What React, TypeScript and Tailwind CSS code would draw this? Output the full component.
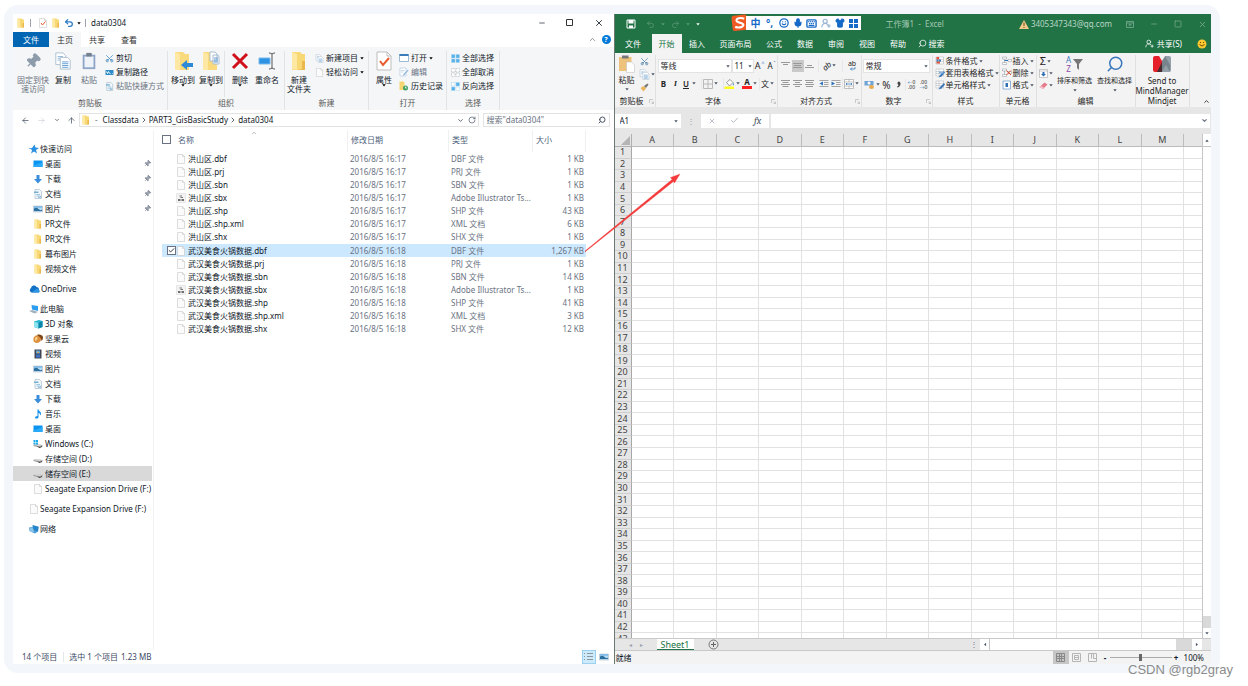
import type { ReactNode } from 'react'
import {
  ArrowLeft, ArrowRight, ArrowUp, Check, ChevronDown, ChevronRight, ChevronUp, Keyboard, Mic,
  Minus, Pin, Redo2, RotateCw, Scissors, Search, Shirt, Smile, Square, Undo2, UserRoundPlus, X,
} from 'lucide-react'

/* ---------- small drawings ---------- */

function Caret({ className = 'text-gray-600' }: { className?: string }) {
  return (
    <svg width="4" height="3" viewBox="0 0 4 3" className={`shrink-0 ${className}`}>
      <path d="M.3.3h3.4L2 2.5z" fill="currentColor" />
    </svg>
  )
}

function FolderIcon({ size = 10 }: { size?: number }) {
  return (
    <svg width={size} height={size} viewBox="0 0 20 20" className="shrink-0">
      <path d="M3 1h8l2 2h3v16H3z" fill="#f8d775" />
      <path d="M3 1l5 2v16l-5-1z" fill="#ffe9a2" />
      <path d="M13 10h3v9H8l5-1z" fill="#e9b94d" />
    </svg>
  )
}

function PageIcon({ size = 10 }: { size?: number }) {
  return (
    <svg width={size} height={size} viewBox="0 0 20 20" className="shrink-0">
      <path d="M3 1h10l4 4v14H3z" fill="#fbfbfb" stroke="#bdbdbd" />
      <path d="M13 1v4h4" fill="none" stroke="#bdbdbd" />
    </svg>
  )
}

function ScriptIcon() {
  return (
    <svg width="10" height="10" viewBox="0 0 20 20" className="shrink-0">
      <path d="M1 1h18v18H1z" fill="#f3f3f3" stroke="#d4d4d4" />
      <path d="M7 6h5M9 9h5" stroke="#777" strokeWidth="2" />
      <path d="M4 14h5M11 14h5" stroke="#444" strokeWidth="3" />
    </svg>
  )
}

function DocIcon({ size = 10 }: { size?: number }) {
  return (
    <svg width={size} height={size} viewBox="0 0 20 20" className="shrink-0">
      <path d="M4 1h9l4 4v14H4z" fill="#f1f7fb" stroke="#8ba5b8" />
      <path d="M2 5h9v3H2z" fill="#78b0d4" />
      <path d="M7 11h7M7 14h3M11 14h4v3h-4z" stroke="#4c92c4" fill="none" />
    </svg>
  )
}

function DesktopIcon() {
  return (
    <svg width="10" height="10" viewBox="0 0 20 20" className="shrink-0">
      <path d="M1 3h18v13H1z" fill="#0a94f0" />
      <path d="M1 13L19 6v10H1z" fill="#29a9f8" />
    </svg>
  )
}

function DownloadIcon() {
  return (
    <svg width="10" height="10" viewBox="0 0 20 20" className="shrink-0">
      <path d="M7 2h6v8h5l-8 9-8-9h5z" fill="#3a8ddb" />
    </svg>
  )
}

function PictureIcon() {
  return (
    <svg width="10" height="10" viewBox="0 0 20 20" className="shrink-0">
      <path d="M1 4h18v12H1z" fill="#b9dcf5" stroke="#a4b1bd" />
      <path d="M2 9q5-3 9 1t7 1v3H2z" fill="#2c6f9d" />
      <path d="M2 5h16v2H2z" fill="#5aa5e0" />
    </svg>
  )
}

function VideoIcon() {
  return (
    <svg width="10" height="10" viewBox="0 0 20 20" className="shrink-0">
      <path d="M3 1h14v18H3z" fill="#3e4551" />
      <path d="M6 3h8v6H6z" fill="#5aa7de" />
      <path d="M6 11h8v6H6z" fill="#3e70c4" />
      <path d="M9 4l4 4H8z" fill="#e9a251" />
    </svg>
  )
}

function MusicIcon() {
  return (
    <svg width="10" height="10" viewBox="0 0 20 20" className="shrink-0">
      <path d="M9 1h2c1 4 5 4 5 8 0 2-1 3-2 4 0-4-1-5-3-5v8c0 2-2 3-4 3s-3-1-3-2 2-3 5-3z" fill="#1590e8" />
    </svg>
  )
}

function StarIcon() {
  return (
    <svg width="10" height="10" viewBox="0 0 20 20" className="shrink-0">
      <path d="M11 1l2 6 7 1-6 4 2 7-6-4-6 4 2-6-2-3H0V9l6-1z" fill="#2b8fe0" />
    </svg>
  )
}

function CloudIcon() {
  return (
    <svg width="11" height="10" viewBox="0 0 22 20" className="shrink-0">
      <path d="M5 17a5 5 0 0 1-1-9 6 6 0 0 1 11-2 5 5 0 0 1 5 6 3 3 0 0 1-1 5z" fill="#1272c8" />
      <path d="M5 17l11-8 4 3a3 3 0 0 1-1 5z" fill="#2f96e4" />
    </svg>
  )
}

function ComputerIcon() {
  return (
    <svg width="10" height="10" viewBox="0 0 20 20" className="shrink-0">
      <path d="M5 2l13 2v10L6 11z" fill="#2c9df0" />
      <path d="M0 14l7-2 11 4-7 3z" fill="#a4b2bd" />
    </svg>
  )
}

function CubeIcon() {
  return (
    <svg width="10" height="10" viewBox="0 0 20 20" className="shrink-0">
      <path d="M2 5l10-3 7 2v12l-8 3-9-3z" fill="#27b4cf" />
      <path d="M2 5l9 3v11l-9-3z" fill="#8ae3ef" />
      <path d="M11 8l8-4v12l-8 3z" fill="#0c85a8" />
    </svg>
  )
}

function NutIcon() {
  return (
    <svg width="10" height="10" viewBox="0 0 20 20" className="shrink-0">
      <path d="M3 5c4-4 11-3 14 1 1 6-3 11-9 12C0 18-1 9 3 5z" fill="#dc8f3c" />
      <path d="M8 2c5-2 11 0 12 4 0 4-1 6-3 8 0-6-4-9-9-12z" fill="#7b4517" />
      <path d="M4 8c2-3 5-2 5 1s-4 6-5 4z" fill="#f8cf8c" />
    </svg>
  )
}

function DriveIcon({ windows }: { windows?: boolean }) {
  return (
    <svg width="10" height="10" viewBox="0 0 20 20" className="shrink-0">
      <path d="M1 12l5-2 13 2v3l-6 2-12-3z" fill="#9b9b9b" />
      <path d="M1 12l5-2 13 2-6 2z" fill="#e0e0e0" />
      <path d="M8 15l6 1 4-2v2l-5 2z" fill="#404040" />
      {windows && <path d="M1 2h4v4H1zM6 2h4v4H6zM1 7h4v4H1zM6 7h4v4H6z" fill="#14a8ec" />}
    </svg>
  )
}

function NetworkIcon() {
  return (
    <svg width="10" height="10" viewBox="0 0 20 20" className="shrink-0">
      <path d="M7 2l12 3-1 10-6 4L1 14l-1-7 7-1z" fill="#4c9fd6" />
      <path d="M8 3l11 3-1 9-9-3z" fill="#2583c9" />
      <path d="M1 8l6-1 3 7-3 3-5-2z" fill="#8cc4e8" />
    </svg>
  )
}

function CopyPages({ size = 20 }: { size?: number }) {
  return (
    <svg width={size} height={size} viewBox="0 0 20 20" className="shrink-0">
      <path d="M2 1h8l3 3v10H2z" fill="#fff" stroke="#a9bdd0" />
      <path d="M4 5h6M4 7h6M4 9h6" stroke="#8db4d8" />
      <path d="M7 6h8l3 3v10H7z" fill="#fff" stroke="#a9bdd0" />
      <path d="M9 11h7M9 13h7M9 15h7M9 17h7" stroke="#5f9bd2" />
    </svg>
  )
}

function Clipboard({ size = 20 }: { size?: number }) {
  return (
    <svg width={size} height={size} viewBox="0 0 20 20" className="shrink-0">
      <path d="M3 3h14v16H3z" fill="#8da5c8" />
      <path d="M5 5h10v12H5z" fill="#eef3fa" />
      <path d="M7 1h6v4H7z" fill="#74808f" />
    </svg>
  )
}

function MoveToIcon() {
  return (
    <svg width="21" height="20" viewBox="0 0 21 20">
      <path d="M2 1h8l2 2h4v16H2z" fill="#f9da7c" />
      <path d="M2 1l5 2v16H2z" fill="#ffe8a3" />
      <path d="M8 14l6-5v3h6v4h-6v3z" fill="#2c8ad9" />
    </svg>
  )
}

function CopyToIcon() {
  return (
    <svg width="21" height="20" viewBox="0 0 21 20">
      <path d="M2 1h8l2 2h4v16H2z" fill="#f9da7c" />
      <path d="M2 1l5 2v16H2z" fill="#ffe8a3" />
      <path d="M9 1h5l2 2v7H9zM12 4h5l1 2v7h-6z" fill="#fff" stroke="#a9bdd0" />
      <path d="M13 7h4M13 9h4M13 11h4" stroke="#5f9bd2" />
    </svg>
  )
}

function DeleteIcon() {
  return (
    <svg width="18" height="18" viewBox="0 0 18 18">
      <path d="M2 2l14 14M16 2L2 16" stroke="#d0111b" strokeWidth="3" />
    </svg>
  )
}

function RenameIcon() {
  return (
    <svg width="18" height="18" viewBox="0 0 18 18">
      <path d="M1 6h11v6H1z" fill="#2b92e4" stroke="#79b9ec" />
      <path d="M14 2v14M11 1q2 0 3 1 1-1 3-1M11 17q2 0 3-1 1 1 3 1" fill="none" stroke="#555" />
    </svg>
  )
}

function CheckDoc({ size = 20 }: { size?: number }) {
  return (
    <svg width={size} height={size} viewBox="0 0 20 20" className="shrink-0">
      <path d="M3 1h10l4 4v14H3z" fill="#fff" stroke="#bdbdbd" />
      <path d="M13 1v4h4" fill="none" stroke="#bdbdbd" />
      <path d="M6 10l3 4 6-7" fill="none" stroke="#ea5a2b" strokeWidth="2" />
    </svg>
  )
}

function PathIcon() {
  return (
    <svg width="9" height="9" viewBox="0 0 18 18" className="shrink-0">
      <path d="M1 4h16v10H1z" fill="#2d8bc9" />
      <path d="M3 7l2 4 2-4 2 4M11 11h1M14 11h1" stroke="#fff" fill="none" strokeWidth="2" />
    </svg>
  )
}

function WindowIcon() {
  return (
    <svg width="10" height="10" viewBox="0 0 20 20" className="shrink-0">
      <path d="M1 3h18v14H1z" fill="#fff" stroke="#7da3c6" strokeWidth="1.5" />
      <path d="M1 2h18v4H1z" fill="#3c7cba" />
    </svg>
  )
}

function EditIcon() {
  return (
    <svg width="10" height="10" viewBox="0 0 20 20" className="shrink-0">
      <path d="M2 2h12v16H2z" fill="#fff" stroke="#9bb9d4" />
      <path d="M4 7h7M4 10h5" stroke="#9bb9d4" />
      <path d="M18 5L9 14l-2 4 4-2 8-9z" fill="#8fb6db" />
    </svg>
  )
}

function HistoryIcon() {
  return (
    <svg width="10" height="10" viewBox="0 0 20 20" className="shrink-0">
      <path d="M1 1h8l2 3v14H1z" fill="#f6d471" />
      <circle cx="13" cy="14" r="5" fill="#43a065" />
      <path d="M13 11v3h3" stroke="#fff" fill="none" strokeWidth="1.5" />
    </svg>
  )
}

function SelectIcon({ kind }: { kind: 'all' | 'none' | 'invert' }) {
  const on = '#56b1ea'
  const off = '#fff'
  const fills = {
    all: [on, on, on, on],
    none: [off, off, off, off],
    invert: [off, on, on, off],
  }[kind]
  return (
    <svg width="9" height="9" viewBox="0 0 18 18" className="shrink-0">
      {fills.map((fill, i) => (
        <rect key={i} x={i % 2 ? 10 : 1} y={i > 1 ? 10 : 1} width="7" height="7" fill={fill}
          stroke={kind === 'none' ? '#9aa4ad' : '#a9d3ee'} strokeDasharray={kind === 'none' ? '2 1' : undefined} />
      ))}
    </svg>
  )
}

/* Spreadsheet ribbon drawings */

function Lines({ widths, from = 2 }: { widths: number[]; from?: number }) {
  return (
    <svg width="9" height="9" viewBox="0 0 9 9">
      {widths.map((w, i) => <path key={i} d={`M${(9 - w) / 2} ${from + i * 2 + 0.5}h${w}`} stroke="#999" />)}
    </svg>
  )
}

function GridGlyph() {
  return (
    <svg width="10" height="10" viewBox="0 0 10 10">
      <path d="M.5.5h9v9h-9zM5 .5v9M.5 5h9" fill="none" stroke="#b9b9b9" />
    </svg>
  )
}

function PaintBucket() {
  return (
    <svg width="11" height="11" viewBox="0 0 22 22">
      <path d="M5 9l7-6 6 6-7 7z" fill="#fff" stroke="#777" strokeWidth="1.5" />
      <path d="M18 9q3 4 1 6-2-1-1-6" fill="#3e7bbd" />
      <path d="M1 17h19v5H1z" fill="#ffff1e" />
    </svg>
  )
}

function IndentIcon({ left }: { left?: boolean }) {
  return (
    <svg width="10" height="9" viewBox="0 0 20 18">
      <path d="M1 3h18M10 7h9M10 11h9M1 15h18" stroke="#8a8a8a" strokeWidth="1.5" />
      <path d={left ? 'M8 5v8L1 9z' : 'M1 5v8l7-4z'} fill="#2d73bd" />
    </svg>
  )
}

function MergeIcon() {
  return (
    <svg width="10" height="10" viewBox="0 0 20 20">
      <path d="M1 1h18v18H1zM1 6h18M1 14h18M10 1v5M10 14v5" fill="#fff" stroke="#888" />
      <path d="M4 10h12M6 8l-2 2 2 2M14 8l2 2-2 2" fill="none" stroke="#2d73bd" strokeWidth="1.5" />
    </svg>
  )
}

function WrapIcon() {
  return (
    <span className="flex flex-col items-center text-[7px] leading-[7px]">
      ab
      <svg width="8" height="4" viewBox="0 0 16 8">
        <path d="M14 0v4H5M8 1L5 4l3 3" fill="none" stroke="#2d73bd" strokeWidth="1.5" />
      </svg>
    </span>
  )
}

function StyleIcon({ kind }: { kind: 'rule' | 'table' | 'cell' }) {
  return (
    <svg width="10" height="10" viewBox="0 0 20 20" className="shrink-0">
      <path d="M2 2h15v14H2zM2 7h15M2 11h15M8 2v14" fill="#fff" stroke="#a5abb2" />
      {kind === 'rule' && <path d="M3 2h5v5H3zM3 11h7v4H3z" fill="#df5237" />}
      {kind === 'rule' && <path d="M8 7h4v4H8zM3 7h4v4H3z" fill="#3a77bd" />}
      {kind !== 'rule' && <path d="M18 6l-8 8-3 5 6-2 7-8z" fill="#3876b9" />}
      {kind === 'table' && <path d="M8 7h9v4H8z" fill="#8ab2dc" />}
    </svg>
  )
}

function CellIcon({ kind }: { kind: 'insert' | 'delete' | 'format' }) {
  return (
    <svg width="10" height="10" viewBox="0 0 20 20" className="shrink-0">
      {kind === 'format' ? (
        <>
          <path d="M2 2h15v16H2z" fill="#fff" stroke="#6d9bcc" strokeWidth="1.5" />
          <path d="M7 6h5v8H7z" fill="#2f6fb4" />
        </>
      ) : (
        <path d="M1 2h8v4H1zM1 13h8v4H1zM5 6v7M12 7h7v4h-7z" fill="#fff" stroke="#8a939c" />
      )}
      {kind === 'delete' && <path d="M9 5l9 9M18 5l-9 9" stroke="#de4a2c" strokeWidth="2" />}
      {kind === 'insert' && <path d="M5 9h7" stroke="#2f6fb4" strokeWidth="2" />}
    </svg>
  )
}

function LauncherIcon() {
  return (
    <svg width="5" height="5" viewBox="0 0 10 10" className="mr-px shrink-0">
      <path d="M1 8V1h7M5 5l4 4M9 5v4H5" fill="none" stroke="#a0a0a0" />
    </svg>
  )
}

function SortIcon() {
  return (
    <span className="flex h-[18px] items-center gap-[2px]">
      <span className="flex flex-col text-[8px] leading-[9px]">
        <span className="text-[#3a77bd]">A</span>
        <span className="text-[#8e4ba6]">Z</span>
      </span>
      <svg width="10" height="12" viewBox="0 0 10 12">
        <path d="M0 1h10L6 6v6l-2-2V6z" fill="#777" />
      </svg>
    </span>
  )
}

function MindManagerIcon() {
  return (
    <svg width="18" height="16" viewBox="0 0 18 16">
      <path d="M0 2q0-2 2-2h4l3 5v11H2q-2 0-2-2z" fill="#e5202a" />
      <path d="M18 2q0-2-2-2h-4L9 5v11h7q2 0 2-2z" fill="#94a1aa" />
      <path d="M9 5l4-5h-1l5 9v7l-4-7-4 7z" fill="#77848d" />
      <path d="M9 6v10H4z" fill="#4b2a30" />
    </svg>
  )
}

/* ---------- explorer ---------- */

function RibbonGroup({ label, className, children }: { label: string; className: string; children: ReactNode }) {
  return (
    <section className={`flex shrink-0 flex-col border-r border-[#e1e3e5] ${className}`}>
      <div className="flex h-[46px] items-start">{children}</div>
      <div className="text-center leading-[11px] text-[#5b5b5b]">{label}</div>
    </section>
  )
}

interface BigButtonProps {
  icon: ReactNode
  lines: string[]
  className: string
  dim?: boolean
  caret?: boolean
}

function BigButton({ icon, lines, className, dim, caret }: BigButtonProps) {
  return (
    <button className={`flex shrink-0 flex-col items-center whitespace-nowrap leading-[9px] ${dim ? 'text-gray-500' : 'text-gray-900'} ${className}`}>
      <span className="mb-1 flex h-5 items-center">{icon}</span>
      {lines.map((line) => <span key={line}>{line}</span>)}
      {caret && <Caret className="text-black" />}
    </button>
  )
}

function SmallButton({ icon, label, dim, caret }: { icon: ReactNode; label: string; dim?: boolean; caret?: boolean }) {
  return (
    <button className={`flex h-[14px] items-center gap-[2px] whitespace-nowrap ${dim ? 'text-gray-500' : 'text-gray-900'}`}>
      {icon}
      {label}
      {caret && <Caret className="text-black" />}
    </button>
  )
}

function ExplorerRibbon() {
  return (
    <div className="flex h-[63px] bg-[#f5f6f7] pt-1">
      <RibbonGroup label="剪贴板" className="w-[155px]">
        <BigButton className="w-10" dim icon={<Pin size={16} className="rotate-45 fill-[#8d9bab] text-[#8d9bab]" />} lines={['固定到快', '速访问']} />
        <BigButton className="w-5" icon={<CopyPages size={18} />} lines={['复制']} />
        <BigButton className="w-8" dim icon={<Clipboard size={18} />} lines={['粘贴']} />
        <div className="flex flex-col">
          <SmallButton icon={<Scissors size={9} className="-rotate-90 text-[#3b86c2]" />} label="剪切" />
          <SmallButton icon={<PathIcon />} label="复制路径" />
          <SmallButton dim icon={<DocIcon size={9} />} label="粘贴快捷方式" />
        </div>
      </RibbonGroup>
      <RibbonGroup label="组织" className="w-[117px]">
        <BigButton className="w-[30px]" caret icon={<MoveToIcon />} lines={['移动到']} />
        <BigButton className="w-[26px]" caret icon={<CopyToIcon />} lines={['复制到']} />
        <div className="h-full w-px bg-[#e1e3e5]" />
        <BigButton className="w-[30px]" caret icon={<DeleteIcon />} lines={['删除']} />
        <BigButton className="w-6" icon={<RenameIcon />} lines={['重命名']} />
      </RibbonGroup>
      <RibbonGroup label="新建" className="w-[84px]">
        <BigButton className="w-7" icon={<FolderIcon size={20} />} lines={['新建', '文件夹']} />
        <div className="flex flex-col pl-[2px]">
          <SmallButton caret icon={<CopyPages size={9} />} label="新建项目" />
          <SmallButton caret icon={<PageIcon size={9} />} label="轻松访问" />
        </div>
      </RibbonGroup>
      <RibbonGroup label="打开" className="w-[78px]">
        <BigButton className="w-[30px]" caret icon={<CheckDoc />} lines={['属性']} />
        <div className="flex flex-col">
          <SmallButton caret icon={<WindowIcon />} label="打开" />
          <SmallButton dim icon={<EditIcon />} label="编辑" />
          <SmallButton icon={<HistoryIcon />} label="历史记录" />
        </div>
      </RibbonGroup>
      <RibbonGroup label="选择" className="w-[53px]">
        <div className="flex flex-col pl-1">
          <SmallButton icon={<SelectIcon kind="all" />} label="全部选择" />
          <SmallButton icon={<SelectIcon kind="none" />} label="全部取消" />
          <SmallButton icon={<SelectIcon kind="invert" />} label="反向选择" />
        </div>
      </RibbonGroup>
    </div>
  )
}

interface NavItem {
  label: string
  icon: ReactNode
  pinned?: boolean
  active?: boolean
}

const QUICK: NavItem[] = [
  { label: '桌面', icon: <DesktopIcon />, pinned: true },
  { label: '下载', icon: <DownloadIcon />, pinned: true },
  { label: '文档', icon: <DocIcon />, pinned: true },
  { label: '图片', icon: <PictureIcon />, pinned: true },
  { label: 'PR文件', icon: <FolderIcon /> },
  { label: 'PR文件', icon: <FolderIcon /> },
  { label: '幕布图片', icon: <FolderIcon /> },
  { label: '视频文件', icon: <FolderIcon /> },
]

const THIS_PC: NavItem[] = [
  { label: '3D 对象', icon: <CubeIcon /> },
  { label: '坚果云', icon: <NutIcon /> },
  { label: '视频', icon: <VideoIcon /> },
  { label: '图片', icon: <PictureIcon /> },
  { label: '文档', icon: <DocIcon /> },
  { label: '下载', icon: <DownloadIcon /> },
  { label: '音乐', icon: <MusicIcon /> },
  { label: '桌面', icon: <DesktopIcon /> },
  { label: 'Windows (C:)', icon: <DriveIcon windows /> },
  { label: '存储空间 (D:)', icon: <DriveIcon /> },
  { label: '储存空间 (E:)', icon: <DriveIcon />, active: true },
  { label: 'Seagate Expansion Drive (F:)', icon: <PageIcon /> },
]

function NavSection({ root, items = [] }: { root: NavItem; items?: NavItem[] }) {
  return (
    <div className="mb-[5px]">
      <a href="#" className="flex h-[15px] items-center gap-px pl-4">{root.icon}{root.label}</a>
      {items.map((item, i) => (
        <a key={i} href="#" className={`flex h-[15px] items-center gap-[2px] whitespace-nowrap pl-5 ${item.active ? 'bg-[#d9d9d9]' : ''}`}>
          {item.icon}
          {item.label}
          {item.pinned && <Pin size={7} className="ml-auto mr-px rotate-45 fill-gray-400 text-gray-500" />}
        </a>
      ))}
    </div>
  )
}

const AI_TYPE = 'Adobe Illustrator Ts...'

const FILES = [
  ['洪山区.dbf', '2016/8/5 16:17', 'DBF 文件', '1 KB'],
  ['洪山区.prj', '2016/8/5 16:17', 'PRJ 文件', '1 KB'],
  ['洪山区.sbn', '2016/8/5 16:17', 'SBN 文件', '1 KB'],
  ['洪山区.sbx', '2016/8/5 16:17', AI_TYPE, '1 KB'],
  ['洪山区.shp', '2016/8/5 16:17', 'SHP 文件', '43 KB'],
  ['洪山区.shp.xml', '2016/8/5 16:17', 'XML 文档', '6 KB'],
  ['洪山区.shx', '2016/8/5 16:17', 'SHX 文件', '1 KB'],
  ['武汉美食火锅数据.dbf', '2016/8/5 16:18', 'DBF 文件', '1,267 KB'],
  ['武汉美食火锅数据.prj', '2016/8/5 16:18', 'PRJ 文件', '1 KB'],
  ['武汉美食火锅数据.sbn', '2016/8/5 16:18', 'SBN 文件', '14 KB'],
  ['武汉美食火锅数据.sbx', '2016/8/5 16:18', AI_TYPE, '1 KB'],
  ['武汉美食火锅数据.shp', '2016/8/5 16:18', 'SHP 文件', '41 KB'],
  ['武汉美食火锅数据.shp.xml', '2016/8/5 16:18', 'XML 文档', '3 KB'],
  ['武汉美食火锅数据.shx', '2016/8/5 16:18', 'SHX 文件', '12 KB'],
]

const SELECTED = 7

function FileTable() {
  return (
    <table className="ml-2 h-[206px] w-[424px] table-fixed border-separate border-spacing-0 whitespace-nowrap text-left">
      <colgroup>
        <col className="w-[14px]" />
        <col className="w-[171px]" />
        <col className="w-[101px]" />
        <col className="w-[84px]" />
        <col className="w-[54px]" />
      </colgroup>
      <thead>
        <tr className="h-[22px] text-[#4c607a]">
          <th className="pb-[3px]">
            <input type="checkbox" aria-label="全选" className="block size-[9px] appearance-none border border-gray-500" />
          </th>
          <th className="pb-[3px] pl-[2px] font-normal">名称</th>
          <th className="border-l border-[#f0f0f0] pb-[3px] pl-[3px] font-normal">修改日期</th>
          <th className="border-l border-[#f0f0f0] pb-[3px] pl-[3px] font-normal">类型</th>
          <th className="border-x border-[#f0f0f0] pb-[3px] pl-[3px] font-normal">大小</th>
        </tr>
      </thead>
      <tbody className="leading-[12px]">
        {FILES.map(([name, date, type, size], i) => (
          <tr key={name} className={i === SELECTED ? 'bg-[#cce8ff]' : ''}>
            <td>
              {i === SELECTED && (
                <label className="relative ml-auto block size-[9px]">
                  <input type="checkbox" defaultChecked aria-label={name} className="block size-[9px] appearance-none border border-gray-500 bg-white" />
                  <Check size={7} strokeWidth={3} className="absolute left-px top-px" />
                </label>
              )}
            </td>
            <td>
              <span className="flex items-center gap-[2px]">
                {name.endsWith('.sbx') ? <ScriptIcon /> : <PageIcon />}
                {name}
              </span>
            </td>
            <td className="pl-[3px] text-gray-500">{date}</td>
            <td className="pl-[3px] text-gray-500">{type}</td>
            <td className="pr-[2px] text-right text-gray-500">{size}</td>
          </tr>
        ))}
      </tbody>
    </table>
  )
}

function Explorer() {
  return (
    <section className="flex min-w-0 flex-[601] flex-col border-r border-[#6b7a70] bg-white">
      <header className="flex h-[18px] items-center pl-[3px] pr-[10px]">
        <FolderIcon />
        <span className="mx-1 h-2 w-px bg-gray-400" />
        <span className="flex items-center gap-[3px] pl-[3px]">
          <CheckDoc size={10} />
          <FolderIcon />
          <Undo2 size={10} strokeWidth={3} className="text-[#2b7cc7]" />
          <Caret className="text-black" />
        </span>
        <span className="ml-1 mr-[5px] h-2 w-px bg-gray-400" />
        <span>data0304</span>
        <div className="ml-auto flex items-center gap-5">
          <button aria-label="最小化"><Minus size={8} /></button>
          <button aria-label="最大化">
            <svg width="8" height="8" viewBox="0 0 8 8">
              <path d="M.5.5h6v6h-6z" fill="none" stroke="#333" />
            </svg>
          </button>
          <button aria-label="关闭"><X size={10} /></button>
        </div>
      </header>
      <nav className="flex h-[15px] items-stretch">
        <button className="w-9 bg-[#0066b4] text-white">文件</button>
        <button className="w-8 bg-[#f5f6f7] text-[#333]">主页</button>
        <button className="w-8 text-[#333]">共享</button>
        <button className="w-8 text-[#333]">查看</button>
        <span className="ml-auto flex items-center gap-[5px] pr-[3px]">
          <ChevronUp size={9} className="text-gray-500" />
          <span className="flex size-[9px] items-center justify-center rounded-full bg-[#0078d7] text-[7px] font-bold text-white">?</span>
        </span>
      </nav>
      <ExplorerRibbon />
      <div className="flex h-5 items-center pr-1">
        <div className="flex w-[66px] items-center justify-between pl-2 pr-[3px] text-gray-600">
          <ArrowLeft size={9} />
          <ArrowRight size={9} className="text-gray-300" />
          <ChevronDown size={6} strokeWidth={3} />
          <ArrowUp size={9} />
        </div>
        <div className="flex h-[14px] flex-1 items-center border border-[#e3e3e3] pl-px pr-[2px]">
          <FolderIcon />
          <span className="pl-1 pr-[5px] text-gray-500">-</span>
          <a href="#">Classdata</a>
          <ChevronRight size={8} className="mx-px" />
          <a href="#">PART3_GisBasicStudy</a>
          <ChevronRight size={8} className="mx-px" />
          <a href="#">data0304</a>
          <ChevronDown size={7} strokeWidth={3} className="ml-auto mr-1 text-gray-600" />
          <RotateCw size={8} className="text-gray-600" />
        </div>
        <label className="ml-1 flex h-[14px] w-[127px] items-center border border-[#e3e3e3] px-[3px]">
          <input aria-label="搜索" placeholder={'搜索"data0304"'} className="min-w-0 flex-1 placeholder:text-gray-500" />
          <Search size={8} strokeWidth={3} className="-scale-x-100 text-gray-600" />
        </label>
      </div>
      <div className="flex min-h-0 flex-1">
        <aside className="w-[141px] shrink-0 border-r border-[#f2f2f2] pr-px pt-[11px]">
          <NavSection root={{ label: '快速访问', icon: <StarIcon /> }} items={QUICK} />
          <NavSection root={{ label: 'OneDrive', icon: <CloudIcon /> }} />
          <NavSection root={{ label: '此电脑', icon: <ComputerIcon /> }} items={THIS_PC} />
          <NavSection root={{ label: 'Seagate Expansion Drive (F:)', icon: <PageIcon /> }} />
          <NavSection root={{ label: '网络', icon: <NetworkIcon /> }} />
        </aside>
        <div className="relative">
          <ChevronUp size={6} className="absolute left-[97px] top-0 text-gray-500" />
          <FileTable />
        </div>
      </div>
      <footer className="flex h-[14px] items-center pl-[9px] text-[#3c4a66]">
        <span className="border-r border-gray-200 pr-[6px]">14 个项目</span>
        <span className="pl-[5px]">选中 1 个项目</span>
        <span className="pl-[3px]">1.23 MB</span>
        <span className="ml-auto flex items-center gap-[3px] pr-[5px]">
          <button aria-label="详细信息" className="flex size-[14px] items-center justify-center border border-[#9bd1ee] bg-[#cdeafa]">
            <svg width="9" height="8" viewBox="0 0 9 8">
              <path d="M0 .5h1M0 3.5h1M0 6.5h1M3 .5h6M3 3.5h6M3 6.5h6" stroke="#8b969e" />
            </svg>
          </button>
          <button aria-label="大图标"><PictureIcon /></button>
        </span>
      </footer>
    </section>
  )
}

/* ---------- spreadsheet ---------- */

const COLUMNS = ['A', 'B', 'C', 'D', 'E', 'F', 'G', 'H', 'I', 'J', 'K', 'L', 'M']
const ROWS = Array.from({ length: 43 }, (_, i) => i + 1)

function InputMethodBar() {
  return (
    <div className="absolute left-[116px] top-0 z-10 flex items-center">
      <svg width="18" height="18" viewBox="0 0 34 34">
        <rect x="2" y="2" width="29" height="29" rx="4" fill="#f05a22" transform="rotate(-6 17 17)" />
        <path d="M25 9q-7-3-13 0-4 4 1 6l8 3q5 3 0 6-7 3-13 0" fill="none" stroke="#fff" strokeWidth="4" />
      </svg>
      <div className="-ml-[3px] flex h-[14px] items-center bg-white pl-[3px] text-[#1569c7]">
        <span className="w-[14px] text-center text-[10px] font-bold">中</span>
        <span className="w-[14px] text-center text-[10px] font-bold">°,</span>
        <span className="flex w-[14px] justify-center"><Smile size={10} strokeWidth={3} /></span>
        <span className="flex w-[14px] justify-center"><Mic size={10} strokeWidth={3} className="fill-[#1569c7]" /></span>
        <span className="flex w-[14px] justify-center"><Keyboard size={11} strokeWidth={3} /></span>
        <span className="flex w-[14px] justify-center text-[#9db7d4]"><UserRoundPlus size={10} strokeWidth={3} /></span>
        <span className="flex w-[14px] justify-center"><Shirt size={10} className="fill-[#1569c7]" /></span>
        <span className="flex w-[14px] justify-center">
          <svg width="9" height="9" viewBox="0 0 9 9">
            <path d="M0 0h4v4H0zM5 0h4v4H5zM0 5h4v4H0zM5 5h4v4H5z" fill="currentColor" />
          </svg>
        </span>
      </div>
    </div>
  )
}

function ExcelGroup({ label, className, launcher, children }: { label: string; className: string; launcher?: boolean; children: ReactNode }) {
  return (
    <section className={`flex shrink-0 flex-col border-r border-[#e0e0e0] ${className}`}>
      <div className="flex h-[41px]">{children}</div>
      <div className="flex items-center leading-[10px]">
        <span className="flex-1 whitespace-nowrap text-center">{label}</span>
        {launcher && <LauncherIcon />}
      </div>
    </section>
  )
}

function Tool({ children, className = 'w-3', label }: { children: ReactNode; className?: string; label: string }) {
  return (
    <button aria-label={label} className={`flex h-3 shrink-0 items-center justify-center gap-px ${className}`}>
      {children}
    </button>
  )
}

function Picker({ label, value, className }: { label: string; value: string; className: string }) {
  return (
    <label className={`relative flex h-[14px] items-center border border-[#e3e3e3] bg-white ${className}`}>
      <select aria-label={label} className="h-3 w-full appearance-none pl-[2px] leading-3">
        <option>{value}</option>
      </select>
      <span className="pointer-events-none absolute right-px top-[5px]"><Caret /></span>
    </label>
  )
}

function RowButton({ icon, label }: { icon: ReactNode; label: string }) {
  return (
    <button className="flex h-3 items-center gap-px whitespace-nowrap">
      {icon}
      {label}
      <Caret />
    </button>
  )
}

function ExcelRibbon() {
  return (
    <div className="flex h-[54px] bg-[#f3f3f3] pt-[2px] text-[#262626]">
      <ExcelGroup label="剪贴板" className="w-[41px]" launcher>
        <button className="flex w-6 flex-col items-center leading-[9px]">
          <svg width="17" height="18" viewBox="0 0 34 36">
            <path d="M2 4h25v28H2z" fill="#edc27a" />
            <path d="M8 1h13v6H8z" fill="#777" />
            <path d="M17 14h10l6 6v15H17z" fill="#fff" stroke="#bbb" />
          </svg>
          <span className="mb-1 mt-[2px]">粘贴</span>
          <Caret />
        </button>
        <div className="flex flex-col gap-px">
          <Tool label="剪切"><Scissors size={9} className="-rotate-90 text-[#4d7fa8]" /></Tool>
          <Tool label="复制" className="w-4"><CopyPages size={11} /><Caret /></Tool>
          <Tool label="格式刷">
            <svg width="9" height="9" viewBox="0 0 18 18">
              <path d="M1 10l6-4 5 5-5 6z" fill="#e9b45c" />
              <path d="M8 6l7-5 2 2-5 7z" fill="#747474" />
            </svg>
          </Tool>
        </div>
      </ExcelGroup>
      <ExcelGroup label="字体" className="w-[122px]" launcher>
        <div className="flex flex-col gap-[5px] pl-[2px] pt-1">
          <div className="flex h-[13px] items-center">
            <Picker label="字体" value="等线" className="w-[74px]" />
            <Picker label="字号" value="11" className="w-[22px]" />
            <Tool label="增大字号"><span className="text-[9px]">A</span><sup className="text-[5px] text-[#2d73bd]">^</sup></Tool>
            <Tool label="减小字号"><span>A</span><sup className="text-[5px] text-[#2d73bd]">ˇ</sup></Tool>
          </div>
          <div className="flex h-[13px] items-center">
            <Tool label="加粗"><b>B</b></Tool>
            <Tool label="倾斜"><b className="font-serif italic">I</b></Tool>
            <Tool label="下划线" className="mr-[3px] w-4"><span className="mr-[2px] font-semibold underline">U</span><Caret /></Tool>
            <Tool label="边框" className="mr-1 w-[18px] border-l border-gray-200"><GridGlyph /><Caret /></Tool>
            <Tool label="填充颜色" className="w-[18px] border-l border-gray-200"><PaintBucket /><Caret /></Tool>
            <Tool label="字体颜色" className="w-[18px]">
              <span className="border-b-[3px] border-[#ff2020] px-[2px] font-bold leading-[8px]">A</span><Caret />
            </Tool>
            <Tool label="拼音" className="w-[17px] border-l border-gray-200">文<Caret /></Tool>
          </div>
        </div>
      </ExcelGroup>
      <ExcelGroup label="对齐方式" className="w-[84px]" launcher>
        <div className="flex flex-col gap-[5px] pl-[2px] pt-1">
          <div className="flex h-[13px] items-center">
            <Tool label="顶端对齐"><Lines widths={[9, 5]} from={1} /></Tool>
            <Tool label="垂直居中" className="w-3 bg-[#c9c9c9]"><Lines widths={[9, 7, 9]} /></Tool>
            <Tool label="底端对齐"><Lines widths={[5, 9]} from={4} /></Tool>
            <Tool label="方向" className="mx-[2px] w-[22px] border-l border-gray-200"><span className="-rotate-45 italic">ab</span><Caret /></Tool>
            <Tool label="自动换行" className="w-5 border-l border-gray-200"><WrapIcon /></Tool>
          </div>
          <div className="flex h-[13px] items-center">
            <Tool label="左对齐"><Lines widths={[9, 6, 9, 6]} from={1} /></Tool>
            <Tool label="居中"><Lines widths={[9, 5, 9, 5]} from={1} /></Tool>
            <Tool label="右对齐"><Lines widths={[9, 7, 9, 7]} from={1} /></Tool>
            <Tool label="减少缩进" className="ml-[2px] w-3"><IndentIcon left /></Tool>
            <Tool label="增加缩进"><IndentIcon /></Tool>
            <Tool label="合并后居中" className="w-[18px] border-l border-gray-200"><MergeIcon /><Caret /></Tool>
          </div>
        </div>
      </ExcelGroup>
      <ExcelGroup label="数字" className="w-[71px]" launcher>
        <div className="flex flex-col gap-[5px] pl-px pt-1">
          <Picker label="数字格式" value="常规" className="w-[67px]" />
          <div className="flex h-[13px] items-center">
            <Tool label="货币" className="w-[18px]">
              <svg width="11" height="10" viewBox="0 0 22 20">
                <path d="M1 2h18v9H1z" fill="#6fa3d4" />
                <circle cx="10" cy="6" r="3" fill="#fff" />
                <ellipse cx="15" cy="14" rx="5" ry="4" fill="#e8aa4c" />
              </svg>
              <Caret />
            </Tool>
            <Tool label="百分比"><span className="text-[10px]">%</span></Tool>
            <Tool label="千位分隔">
              <svg width="5" height="7" viewBox="0 0 10 14">
                <path d="M5 1a4 4 0 0 1 4 4q0 6-6 8l-1-2q3-1 3-3a4 4 0 0 1 0-7" fill="#444" />
              </svg>
            </Tool>
            <Tool label="增加小数位" className="w-[13px] border-l border-gray-200"><span className="text-[5px] leading-[5px]"><span className="text-[#2d73bd]">←</span>0<br />.00</span></Tool>
            <Tool label="减少小数位"><span className="text-[5px] leading-[5px]">.00<br /><span className="text-[#2d73bd]">→</span>0</span></Tool>
          </div>
        </div>
      </ExcelGroup>
      <ExcelGroup label="样式" className="w-[67px]">
        <div className="flex flex-col pl-[2px]">
          <RowButton icon={<StyleIcon kind="rule" />} label="条件格式" />
          <RowButton icon={<StyleIcon kind="table" />} label="套用表格格式" />
          <RowButton icon={<StyleIcon kind="cell" />} label="单元格样式" />
        </div>
      </ExcelGroup>
      <ExcelGroup label="单元格" className="w-[37px]">
        <div className="flex flex-col pl-[2px]">
          <RowButton icon={<CellIcon kind="insert" />} label="插入" />
          <RowButton icon={<CellIcon kind="delete" />} label="删除" />
          <RowButton icon={<CellIcon kind="format" />} label="格式" />
        </div>
      </ExcelGroup>
      <ExcelGroup label="编辑" className="w-[99px]">
        <div className="flex flex-col">
          <Tool label="求和" className="w-[18px]"><span className="text-[11px]">Σ</span><Caret /></Tool>
          <Tool label="填充" className="w-[18px]">
            <svg width="9" height="9" viewBox="0 0 18 18">
              <path d="M1 1h16v16H1zM1 4h16" fill="#fff" stroke="#999" />
              <path d="M7 6h4v4h3l-5 5-5-5h3z" fill="#2f6fb4" />
            </svg>
            <Caret />
          </Tool>
          <Tool label="清除" className="w-[18px]">
            <svg width="9" height="9" viewBox="0 0 18 18">
              <path d="M1 12L11 3l6 4L8 16z" fill="#e57b8d" />
              <path d="M1 12l3-3 6 5-2 2z" fill="#f6c2cb" />
            </svg>
            <Caret />
          </Tool>
        </div>
        <button className="flex w-10 flex-col items-center whitespace-nowrap text-[7px] leading-[9px]">
          <SortIcon />
          <span className="mb-1 mt-[3px]">排序和筛选</span>
          <Caret />
        </button>
        <button className="flex w-10 flex-col items-center whitespace-nowrap text-[7px] leading-[9px]">
          <Search size={18} className="-scale-x-100 text-[#3a77bd]" />
          <span className="mb-1 mt-[3px]">查找和选择</span>
          <Caret />
        </button>
      </ExcelGroup>
      <ExcelGroup label="Mindjet" className="w-[54px]">
        <button className="flex w-full flex-col items-center leading-[10px]">
          <span className="mb-1 pt-px"><MindManagerIcon /></span>
          <span className="whitespace-nowrap">Send to</span>
          <span className="whitespace-nowrap">MindManager</span>
        </button>
      </ExcelGroup>
      <button aria-label="折叠功能区" className="ml-auto self-end pb-[2px] pr-px"><ChevronUp size={7} strokeWidth={3} /></button>
    </div>
  )
}

function Sheet() {
  return (
    <div className="flex min-h-0 flex-1">
      <div className="min-w-0 flex-1 overflow-hidden bg-white">
        <table className="h-[511px] w-full table-fixed border-separate border-spacing-0 text-center text-[9px] leading-[10px] text-[#444]">
          <thead>
            <tr className="h-[13px] bg-[#e6e6e6]">
              <th className="w-[17px] border-b border-r border-[#b0b0b0] p-0">
                <svg width="9" height="9" viewBox="0 0 9 9" className="ml-auto mr-px">
                  <path d="M9 0v9H0z" fill="#b4b4b4" />
                </svg>
              </th>
              {COLUMNS.map((c) => <th key={c} className="border-b border-r border-[#bcbcbc] p-0 font-normal">{c}</th>)}
              <th className="w-[18px] border-b border-[#bcbcbc] p-0" />
            </tr>
          </thead>
          <tbody>
            {ROWS.map((r) => (
              <tr key={r}>
                <th className="border-b border-r border-b-[#cfcfcf] border-r-[#a8a8a8] bg-[#e6e6e6] p-0 font-normal">{r}</th>
                {COLUMNS.map((c) => <td key={c} className="border-b border-r border-[#e1e1e1] p-0" />)}
                <td className="border-b border-[#e1e1e1] p-0" />
              </tr>
            ))}
          </tbody>
        </table>
      </div>
      <div className="flex w-[9px] flex-col border-l border-[#c6c6c6] bg-[#d9d9d9]">
        <button aria-label="向上滚动" className="flex h-3 items-center justify-center bg-white"><span className="rotate-180"><Caret /></span></button>
        <div className="flex-1 border-t border-[#c6c6c6] bg-white" />
        <div className="h-3" />
        <button aria-label="向下滚动" className="flex h-[10px] items-center justify-center bg-white"><Caret /></button>
      </div>
    </div>
  )
}

function Spreadsheet() {
  return (
    <section className="relative flex min-w-0 flex-[597] flex-col bg-[#e6e6e6]">
      <InputMethodBar />
      <header className="flex h-5 items-center bg-[#217346] pr-1 text-[#a3c7b2]">
        <div className="flex w-[271px] items-center gap-[6px] pl-[11px]">
          <svg width="10" height="10" viewBox="0 0 20 20" className="mr-1">
            <path d="M2 2h16v16H2z" fill="none" stroke="#fff" strokeWidth="2" />
            <path d="M5 2h10v7H5zM6 13h8v5H6z" fill="#fff" />
          </svg>
          <Undo2 size={9} className="text-[#5c9a78]" />
          <Caret className="text-[#5c9a78]" />
          <Redo2 size={9} className="text-[#5c9a78]" />
          <Caret className="text-[#5c9a78]" />
          <Caret className="text-white" />
        </div>
        <span className="whitespace-nowrap">工作簿1&nbsp; -&nbsp; Excel</span>
        <div className="ml-auto flex items-center text-[#b9d5c5]">
          <svg width="10" height="9" viewBox="0 0 20 18">
            <path d="M10 0l10 18H0z" fill="#f5c98a" />
            <path d="M10 5v7M10 14v2" stroke="#6b4a1d" strokeWidth="2" />
          </svg>
          <span className="pl-[2px]">3405347343@qq.com</span>
        </div>
        <div className="flex items-center gap-4 pl-[14px] text-[#7fb095]">
          <svg width="8" height="7" viewBox="0 0 16 14">
            <path d="M1 1h14v12H1zM1 4h14M8 11V6M5 8l3-2 3 2" fill="none" stroke="currentColor" strokeWidth="1.5" />
          </svg>
          <Minus size={8} />
          <Square size={8} />
          <X size={9} />
        </div>
      </header>
      <nav className="flex h-[19px] items-stretch bg-[#217346] text-white">
        <button className="w-[37px]">文件</button>
        <button className="w-[30px] bg-[#f3f3f3] text-[#217346]">开始</button>
        <button className="w-[31px]">插入</button>
        <button className="w-[46px]">页面布局</button>
        <button className="w-[31px]">公式</button>
        <button className="w-[31px]">数据</button>
        <button className="w-[31px]">审阅</button>
        <button className="w-[31px]">视图</button>
        <button className="w-[31px]">帮助</button>
        <button className="flex items-center gap-[2px] pl-1"><Search size={9} className="-scale-x-100" />搜索</button>
        <button className="ml-auto flex items-center gap-[3px] pr-[15px]"><UserRoundPlus size={9} />共享(S)</button>
        <svg width="10" height="10" viewBox="0 0 20 20" className="mr-1 self-center">
          <circle cx="10" cy="10" r="9" fill="#fdc82f" />
          <path d="M6 7h2M12 7h2M5 11q5 6 10 0" fill="none" stroke="#6b4d0a" strokeWidth="2" />
        </svg>
      </nav>
      <ExcelRibbon />
      <div className="flex h-[27px] items-center pr-px">
        <label className="relative flex h-[14px] w-[66px] items-center bg-white">
          <input aria-label="名称框" defaultValue="A1" className="w-full pl-[5px]" />
          <span className="pointer-events-none absolute right-[3px] top-[6px]"><Caret /></span>
        </label>
        <span className="w-5 text-center text-gray-400">⋮</span>
        <div className="mr-[2px] flex h-[14px] w-[68px] items-center justify-around bg-white text-gray-400">
          <X size={8} />
          <Check size={9} />
          <span className="font-serif text-[10px] italic text-gray-600">fx</span>
        </div>
        <label className="flex h-[14px] flex-1 items-center bg-white pr-[2px]">
          <input aria-label="编辑栏" className="min-w-0 flex-1" />
          <ChevronDown size={7} strokeWidth={4} className="text-gray-500" />
        </label>
      </div>
      <Sheet />
      <div className="flex h-[13px] items-stretch border-b border-t border-[#c9c9c9] bg-[#e6e6e6]">
        <div className="flex w-[42px] items-center justify-center gap-2 text-[6px] text-gray-400"><span>◂</span><span>▸</span></div>
        <button className="w-[37px] border-b border-[#217346] bg-white text-[9px] leading-[9px] text-[#217346]">Sheet1</button>
        <button aria-label="新工作表" className="ml-[14px] flex items-center">
          <svg width="11" height="11" viewBox="0 0 11 11">
            <path d="M3 5.5h5M5.5 3v5" stroke="#666" />
            <circle cx="5.5" cy="5.5" r="4.5" fill="none" stroke="#777" />
          </svg>
        </button>
        <div className="ml-auto flex items-stretch pr-[9px]">
          <span className="w-3 text-center text-gray-500">⋮</span>
          <button aria-label="向左滚动" className="flex w-[10px] items-center justify-center border-r border-[#c6c6c6] bg-white"><span className="rotate-90"><Caret /></span></button>
          <div className="w-[186px] bg-white" />
          <div className="w-4 bg-[#d9d9d9]" />
          <button aria-label="向右滚动" className="flex w-[10px] items-center justify-center bg-white"><span className="-rotate-90"><Caret /></span></button>
        </div>
      </div>
      <footer className="flex h-[13px] items-center bg-[#f3f3f3] pl-px pr-[7px]">
        <span>就绪</span>
        <div className="ml-auto flex items-center">
          <button aria-label="普通" className="flex h-[13px] w-4 items-center justify-center bg-[#c6c6c6]">
            <svg width="9" height="9" viewBox="0 0 9 9"><path d="M.5.5h8v8h-8zM3.5.5v8M5.5.5v8M.5 3.5h8M.5 5.5h8" fill="none" stroke="#888" /></svg>
          </button>
          <button aria-label="页面布局" className="flex w-4 items-center justify-center">
            <svg width="9" height="9" viewBox="0 0 9 9"><path d="M.5.5h8v8h-8zM2.5 2.5h4v4h-4zM3 4.5h3" fill="none" stroke="#b5b5b5" /></svg>
          </button>
          <button aria-label="分页预览" className="flex w-4 items-center justify-center">
            <svg width="9" height="9" viewBox="0 0 9 9"><path d="M.5.5h8v8h-8zM3.5.5v5M5.5.5v5h3" fill="none" stroke="#b5b5b5" /></svg>
          </button>
          <span className="w-[9px] text-center font-bold">-</span>
          <input
            type="range"
            aria-label="缩放"
            defaultValue={50}
            className="h-[7px] w-[62px] appearance-none bg-[linear-gradient(#aaa,#aaa)] bg-[length:100%_1px] bg-center bg-no-repeat [&::-webkit-slider-thumb]:h-[7px] [&::-webkit-slider-thumb]:w-[3px] [&::-webkit-slider-thumb]:appearance-none [&::-webkit-slider-thumb]:bg-[#666]"
          />
          <span className="w-[9px] text-center font-bold">+</span>
          <span className="pl-[3px]">100%</span>
        </div>
      </footer>
    </section>
  )
}

export default function App() {
  return (
    <div className="relative flex h-screen flex-col overflow-hidden bg-white pb-[13px] pl-1 pr-7 pt-[5px] font-['Noto_Sans','Noto_Sans_CJK_SC',sans-serif] text-[8px] leading-[10px] text-gray-900">
      <main className="relative flex min-h-0 flex-1 rounded-[14px] bg-[#f3f7fc] p-[9px]">
        <Explorer />
        <Spreadsheet />
        {/* drag arrow from the file to the sheet */}
        <svg width="98" height="80" viewBox="0 0 98 80" className="pointer-events-none absolute left-[581px] top-[168px]">
          <path d="M0 78L87 6.5 85.5 4.5 95 1 89.5 10 88.5 8.5 0 79z" fill="#f53b3b" stroke="#f53b3b" strokeWidth=".3" />
        </svg>
      </main>
      <span className="absolute bottom-[9px] right-[15px] font-['Liberation_Sans',sans-serif] text-[13px] leading-[14px] text-[#8b8b8b]">CSDN @rgb2gray</span>
    </div>
  )
}
